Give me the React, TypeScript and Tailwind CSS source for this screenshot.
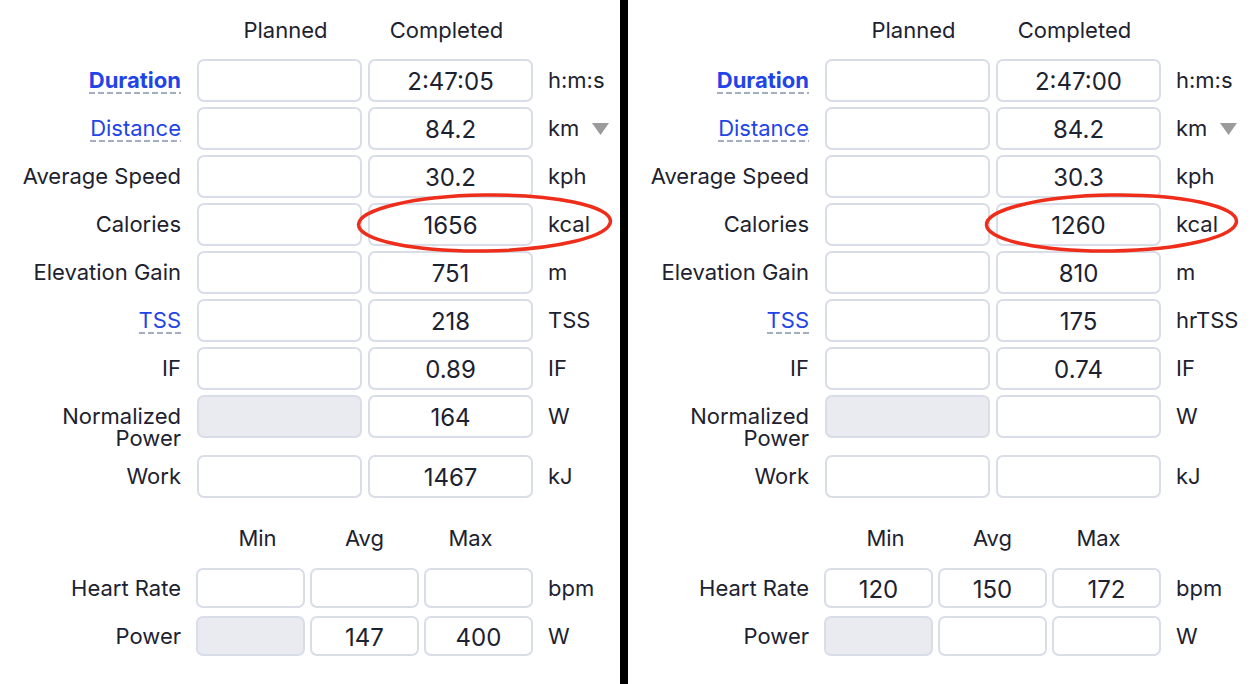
import React from 'react';

type Row = {
  label: string;
  link?: 'bold' | 'plain';
  dashed?: boolean;
  planned?: string;
  plannedDisabled?: boolean;
  completed?: string;
  unit: string;
  dropdown?: boolean;
  twoLine?: boolean;
};

type Panel = {
  rows: Row[];
  hr: [string, string, string];
  power: [string, string];
};

const left: Panel = {
  rows: [
    { label: 'Duration', link: 'bold', dashed: true, completed: '2:47:05', unit: 'h:m:s' },
    { label: 'Distance', link: 'plain', dashed: true, completed: '84.2', unit: 'km', dropdown: true },
    { label: 'Average Speed', completed: '30.2', unit: 'kph' },
    { label: 'Calories', completed: '1656', unit: 'kcal' },
    { label: 'Elevation Gain', completed: '751', unit: 'm' },
    { label: 'TSS', link: 'plain', dashed: true, completed: '218', unit: 'TSS' },
    { label: 'IF', completed: '0.89', unit: 'IF' },
    { label: 'Normalized Power', twoLine: true, plannedDisabled: true, completed: '164', unit: 'W' },
    { label: 'Work', completed: '1467', unit: 'kJ' },
  ],
  hr: ['', '', ''],
  power: ['147', '400'],
};

const right: Panel = {
  rows: [
    { label: 'Duration', link: 'bold', dashed: true, completed: '2:47:00', unit: 'h:m:s' },
    { label: 'Distance', link: 'plain', dashed: true, completed: '84.2', unit: 'km', dropdown: true },
    { label: 'Average Speed', completed: '30.3', unit: 'kph' },
    { label: 'Calories', completed: '1260', unit: 'kcal' },
    { label: 'Elevation Gain', completed: '810', unit: 'm' },
    { label: 'TSS', link: 'plain', dashed: true, completed: '175', unit: 'hrTSS' },
    { label: 'IF', completed: '0.74', unit: 'IF' },
    { label: 'Normalized Power', twoLine: true, plannedDisabled: true, completed: '', unit: 'W' },
    { label: 'Work', completed: '', unit: 'kJ' },
  ],
  hr: ['120', '150', '172'],
  power: ['', ''],
};

function Box({ value, disabled, w, h }: { value?: string; disabled?: boolean; w: string; h: string }) {
  return (
    <div
      className={`${w} ${h} shrink-0 rounded-[7px] border-2 border-[#d9dde8] flex items-center justify-center text-[24px] ${
        disabled ? 'bg-[#e9ebf0]' : 'bg-white'
      }`}
    >
      <span className="pt-[3px] leading-[28px]">{value}</span>
    </div>
  );
}

function Label({ row }: { row: Row }) {
  if (row.link) {
    // dashed-underline link, dashes drawn as a repeating gradient
    return (
      <span
        className={`inline-block pb-[3px] text-[#1f45e8] bg-[repeating-linear-gradient(90deg,#a5adc0_0_6px,transparent_6px_9px)] bg-no-repeat bg-bottom bg-[length:100%_2px] ${
          row.link === 'bold' ? 'font-bold' : ''
        }`}
      >
        {row.label}
      </span>
    );
  }
  if (row.twoLine) {
    return (
      <span>
        Normalized
        <br />
        Power
      </span>
    );
  }
  return <span>{row.label}</span>;
}

function StatsPanel({ data, width }: { data: Panel; width: string }) {
  return (
    <div className={`${width} shrink-0 bg-white text-[#1d2230] text-[22px]`}>
      <div className="flex h-[59px] pt-[18px] leading-[24px]">
        <div className="w-[197px]" />
        <div className="w-[165px] text-center pl-[12px]">Planned</div>
        <div className="w-[6px]" />
        <div className="w-[165px] text-center pr-[8px]">Completed</div>
      </div>

      {data.rows.map((row) => (
        <div key={row.label} className={`flex items-start ${row.twoLine ? 'mb-[6px]' : 'mb-[5px]'}`}>
          <div className="w-[181px] max-h-[54px] text-right pt-[10px] leading-[22px] flex-none">
            <Label row={row} />
          </div>
          <div className="ml-[16px]">
            <Box w="w-[165px]" h="h-[43px]" disabled={row.plannedDisabled} value={row.planned} />
          </div>
          <div className="ml-[6px]">
            <Box w="w-[165px]" h="h-[43px]" value={row.completed} />
          </div>
          <div className="ml-[15px] pt-[10px] leading-[22px] flex items-center gap-[13px]">
            <span>{row.unit}</span>
            {row.dropdown && (
              <svg width="17" height="12" viewBox="0 0 17 12" className="mt-[2px]">
                <polygon points="0,0 17,0 8.5,12" fill="#9b9b9b" />
              </svg>
            )}
          </div>
        </div>
      ))}

      <div className="flex mt-[28px] h-[42px] leading-[24px]">
        <div className="w-[196px]" />
        <div className="w-[109px] text-center pl-[14px]">Min</div>
        <div className="w-[5px]" />
        <div className="w-[109px] text-center">Avg</div>
        <div className="w-[5px]" />
        <div className="w-[109px] text-center pr-[16px]">Max</div>
      </div>

      <div className="flex items-start mb-[8px]">
        <div className="w-[181px] text-right pt-[9px] leading-[22px]">Heart Rate</div>
        <div className="ml-[15px] flex gap-[5px]">
          {data.hr.map((v, i) => (
            <Box key={i} w="w-[109px]" h="h-[40px]" value={v} />
          ))}
        </div>
        <div className="ml-[15px] pt-[9px] leading-[22px]">bpm</div>
      </div>

      <div className="flex items-start">
        <div className="w-[181px] text-right pt-[9px] leading-[22px]">Power</div>
        <div className="ml-[15px] flex gap-[5px]">
          <Box w="w-[109px]" h="h-[40px]" disabled />
          <Box w="w-[109px]" h="h-[40px]" value={data.power[0]} />
          <Box w="w-[109px]" h="h-[40px]" value={data.power[1]} />
        </div>
        <div className="ml-[15px] pt-[9px] leading-[22px]">W</div>
      </div>
    </div>
  );
}

export default function App() {
  return (
    <div
      className="relative w-[1256px] h-[684px] flex bg-white overflow-hidden"
      style={{ fontFamily: 'Inter, "Noto Sans", sans-serif' }}
    >
      <StatsPanel data={left} width="w-[620px]" />
      <div className="w-[8px] shrink-0 bg-black" />
      <StatsPanel data={right} width="w-[628px]" />

      {/* red annotation rings */}
      <svg className="absolute inset-0 pointer-events-none" width="1256" height="684">
        <ellipse cx="484.5" cy="223" rx="126" ry="28" fill="none" stroke="#ee2d1a" strokeWidth="3.5" transform="rotate(-0.8 484.5 223)" />
        <ellipse cx="1111.5" cy="223" rx="125" ry="28" fill="none" stroke="#ee2d1a" strokeWidth="3.5" transform="rotate(-0.8 1111.5 223)" />
      </svg>
    </div>
  );
}
